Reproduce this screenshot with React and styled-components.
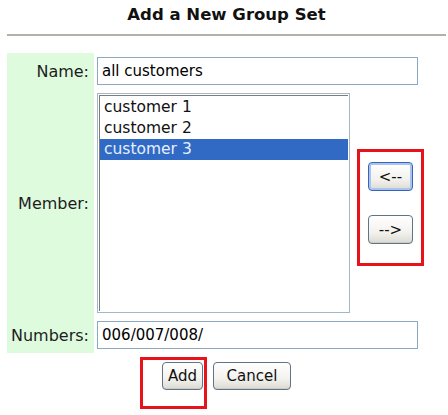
import React from "react";
import styled, { createGlobalStyle } from "styled-components";

const GlobalStyle = createGlobalStyle`
  html, body {
    margin: 0;
    padding: 0;
    background: #fff;
  }
  body {
    font-family: "DejaVu Sans", Verdana, sans-serif;
  }
`;

const Page = styled.div`
  width: 439px;
  padding: 0 2px 0 7px;
`;

const Title = styled.h1`
  margin: 0;
  padding-top: 5px;
  height: 34px;
  box-sizing: border-box;
  font-size: 16.5px;
  line-height: 20px;
  font-weight: bold;
  text-align: center;
  color: #111;
`;

const Rule = styled.hr`
  margin: 0 0 17px 0;
  border: 0;
  border-top: 2px solid #b4b2a8;
  height: 0;
`;

const FormGrid = styled.div`
  display: grid;
  grid-template-columns: 87px 1fr;
`;

const Label = styled.div`
  background: #defbde;
  display: flex;
  align-items: center;
  justify-content: flex-end;
  padding-right: 5px;
  font-size: 16px;
  color: #1d1d1d;
`;

const Cell = styled.div`
  display: flex;
  align-items: ${(p) => p.$align || "center"};
  gap: 7px;
  padding: 4px 0 4px 3px;
`;

const TextInput = styled.input`
  box-sizing: border-box;
  width: 321px;
  height: 28px;
  margin: 0;
  padding: 0 4px;
  border: 1px solid #8fa8c2;
  font-family: "DejaVu Sans", Tahoma, sans-serif;
  font-size: 15px;
  color: #000;
  outline: none;
`;

const ListBox = styled.div`
  box-sizing: border-box;
  width: 253px;
  height: 220px;
  border: 1px solid #a3b7cc;
  padding: 1px;
  background: #fff;
`;

const ListInner = styled.div`
  height: 100%;
  box-sizing: border-box;
  border-top: 1px solid #7c7c7c;
  border-left: 1px solid #7c7c7c;
  padding-top: 1px;
`;

const ListItem = styled.div`
  height: 21px;
  line-height: 21px;
  padding-left: 4px;
  font-size: 15.5px;
  background: ${(p) => (p.$selected ? "#316ac5" : "transparent")};
  color: ${(p) => (p.$selected ? "#e6efff" : "#111")};
`;

const MarkedBox = styled.div`
  box-sizing: border-box;
  width: 67px;
  height: 117px;
  margin-top: 56px;
  border: 3px solid #e8121a;
  padding: 10px 8px 0 8px;
  display: flex;
  flex-direction: column;
  gap: 24px;
`;

const Button = styled.button`
  box-sizing: border-box;
  height: ${(p) => p.$h || 28}px;
  width: ${(p) => p.$w}px;
  margin: 0;
  padding: 0;
  border: 1px solid ${(p) => (p.$focus ? "#3a62b8" : "#5f7488")};
  border-radius: 4px;
  background: linear-gradient(#ffffff, #f3f2ee 60%, #dcdad2);
  box-shadow: ${(p) =>
    p.$focus ? "inset 0 0 0 2px #a8c4f0" : "inset 0 -1px 0 #cfccc2"};
  font-family: "DejaVu Sans", Tahoma, sans-serif;
  font-size: 15px;
  color: #111;
`;

const ButtonRow = styled.div`
  display: flex;
  justify-content: center;
  gap: 10px;
  margin-top: 9px;
  padding-bottom: 24px;
`;

const Marked = styled.div`
  position: relative;
  display: flex;
  &::after {
    content: "";
    position: absolute;
    top: -5px;
    left: -22px;
    right: -4px;
    bottom: -19px;
    border: 3px solid #e8121a;
    pointer-events: none;
  }
`;

const customers = ["customer 1", "customer 2", "customer 3"];

export default function App() {
  return (
    <>
      <GlobalStyle />
      <Page>
        <Title>Add a New Group Set</Title>
        <Rule />
        <FormGrid>
          <Label>Name:</Label>
          <Cell>
            <TextInput defaultValue="all customers" />
          </Cell>

          <Label>Member:</Label>
          <Cell $align="flex-start">
            <ListBox>
              <ListInner>
                {customers.map((c, i) => (
                  <ListItem key={c} $selected={i === 2}>
                    {c}
                  </ListItem>
                ))}
              </ListInner>
            </ListBox>
            <MarkedBox>
              <Button $w={45} $h={29} $focus>&lt;--</Button>
              <Button $w={45} $h={29}>--&gt;</Button>
            </MarkedBox>
          </Cell>

          <Label>Numbers:</Label>
          <Cell>
            <TextInput defaultValue="006/007/008/" />
          </Cell>
        </FormGrid>
        <ButtonRow>
          <Marked>
            <Button $w={41}>Add</Button>
          </Marked>
          <Button $w={78}>Cancel</Button>
        </ButtonRow>
      </Page>
    </>
  );
}
